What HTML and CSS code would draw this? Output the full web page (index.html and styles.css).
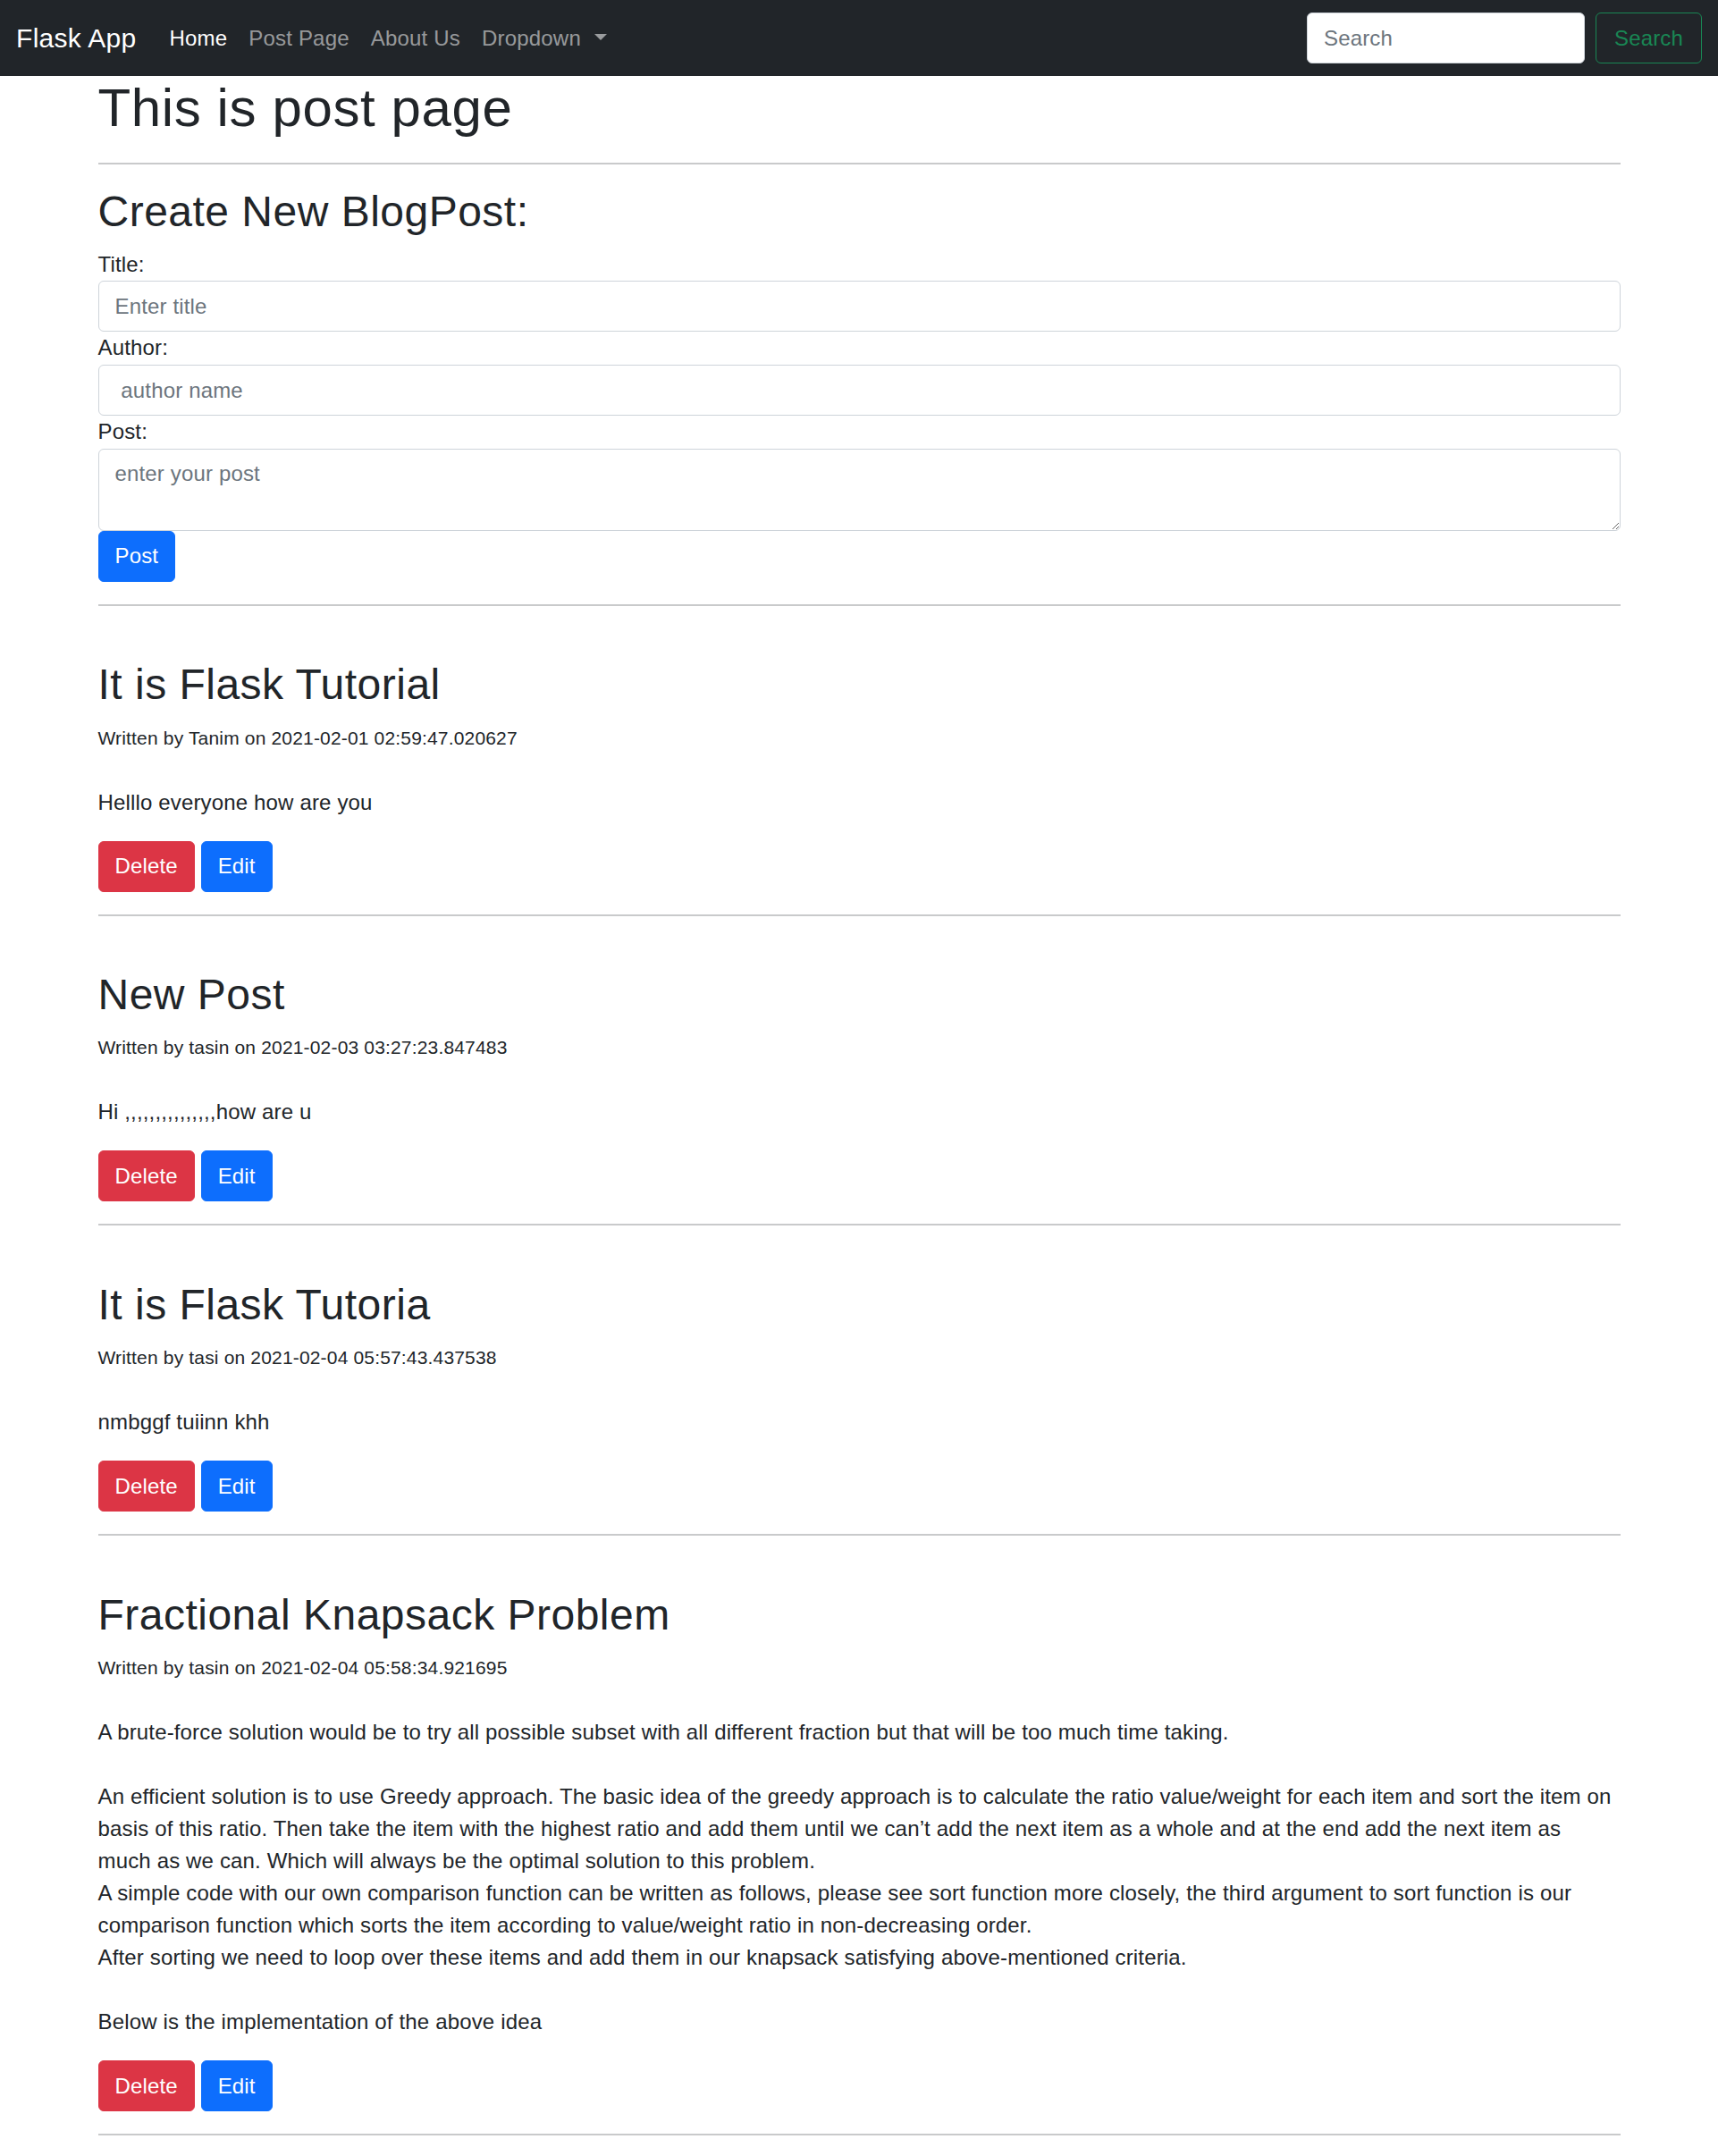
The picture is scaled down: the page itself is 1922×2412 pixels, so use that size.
FILE: index.html
```html
<!DOCTYPE html>
<html lang="en">
<head>
<meta charset="utf-8">
<title>Flask App - Posts</title>
<link rel="stylesheet" href="styles.css">
</head>
<body>
<nav class="navbar">
  <a class="brand" href="#">Flask App</a>
  <ul class="nav-links">
    <li><a class="nav-link active" href="#">Home</a></li>
    <li><a class="nav-link" href="#">Post Page</a></li>
    <li><a class="nav-link" href="#">About Us</a></li>
    <li><a class="nav-link dropdown-toggle" href="#">Dropdown</a></li>
  </ul>
  <form class="search-form">
    <input class="search-input" type="search" placeholder="Search">
    <button class="btn btn-outline-success" type="button">Search</button>
  </form>
</nav>

<main class="container">
  <h1 class="page-title">This is post page</h1>
  <hr class="rule">
  <h2 class="section-title">Create New BlogPost:</h2>
  <form class="post-form">
    <label class="field-label" for="title">Title:</label>
    <input class="form-control" id="title" type="text" placeholder="Enter title">
    <label class="field-label" for="author">Author:</label>
    <input class="form-control" id="author" type="text" placeholder=" author name">
    <label class="field-label" for="post">Post:</label>
    <textarea class="form-control form-textarea" id="post" placeholder="enter your post"></textarea>
    <button class="btn btn-primary" type="button">Post</button>
  </form>
  <hr class="rule">

  <article class="post">
    <h2 class="post-title">It is Flask Tutorial</h2>
    <div class="post-meta"><small>Written by Tanim on 2021-02-01 02:59:47.020627</small></div>
    <p class="post-body">Helllo everyone how are you</p>
    <div class="post-actions"><a class="btn btn-danger" href="#">Delete</a> <a class="btn btn-primary" href="#">Edit</a></div>
  </article>
  <hr class="rule">

  <article class="post">
    <h2 class="post-title">New Post</h2>
    <div class="post-meta"><small>Written by tasin on 2021-02-03 03:27:23.847483</small></div>
    <p class="post-body">Hi ,,,,,,,,,,,,,,,how are u</p>
    <div class="post-actions"><a class="btn btn-danger" href="#">Delete</a> <a class="btn btn-primary" href="#">Edit</a></div>
  </article>
  <hr class="rule">

  <article class="post">
    <h2 class="post-title">It is Flask Tutoria</h2>
    <div class="post-meta"><small>Written by tasi on 2021-02-04 05:57:43.437538</small></div>
    <p class="post-body">nmbggf tuiinn khh</p>
    <div class="post-actions"><a class="btn btn-danger" href="#">Delete</a> <a class="btn btn-primary" href="#">Edit</a></div>
  </article>
  <hr class="rule">

  <article class="post">
    <h2 class="post-title">Fractional Knapsack Problem</h2>
    <div class="post-meta"><small>Written by tasin on 2021-02-04 05:58:34.921695</small></div>
    <p class="post-body">A brute-force solution would be to try all possible subset with all different fraction but that will be too much time taking.<br><br>An efficient solution is to use Greedy approach. The basic idea of the greedy approach is to calculate the ratio value/weight for each item and sort the item on basis of this ratio. Then take the item with the highest ratio and add them until we can’t add the next item as a whole and at the end add the next item as<br>much as we can. Which will always be the optimal solution to this problem.<br>A simple code with our own comparison function can be written as follows, please see sort function more closely, the third argument to sort function is our comparison function which sorts the item according to value/weight ratio in non-decreasing order.<br>After sorting we need to loop over these items and add them in our knapsack satisfying above-mentioned criteria.<br><br>Below is the implementation of the above idea</p>
    <div class="post-actions"><a class="btn btn-danger" href="#">Delete</a> <a class="btn btn-primary" href="#">Edit</a></div>
  </article>
  <hr class="rule rule-last">
</main>
</body>
</html>
```

FILE: styles.css
```css
html, body {
  margin: 0;
  padding: 0;
}

body {
  font-family: "Liberation Sans", Arial, Helvetica, sans-serif;
  font-size: 24px;
  line-height: 36px;
  letter-spacing: 0.0065em;
  color: #212529;
  background: #fff;
}

/* ---------- navbar ---------- */
.navbar {
  display: flex;
  align-items: center;
  height: 85px;
  padding: 0 18px;
  background: #212529;
  box-sizing: border-box;
}

.brand {
  font-size: 30px;
  line-height: 45px;
  letter-spacing: 0.01em;
  color: #fff;
  text-decoration: none;
  margin-right: 25px;
}

.nav-links {
  display: flex;
  list-style: none;
  margin: 0;
  padding: 0;
}

.nav-link {
  display: block;
  padding: 12px;
  letter-spacing: 0.008em;
  color: rgba(255, 255, 255, 0.55);
  text-decoration: none;
}

.nav-link.active {
  color: #fff;
}

.dropdown-toggle::after {
  content: "";
  display: inline-block;
  margin-left: 15px;
  vertical-align: 6px;
  border-top: 7px solid;
  border-right: 7px solid transparent;
  border-left: 7px solid transparent;
  border-bottom: 0;
}

.search-form {
  display: flex;
  margin: 0 0 0 auto;
}

.search-input {
  width: 311px;
  height: 57px;
  box-sizing: border-box;
  margin-right: 12px;
  padding: 9.5px 18px;
  font: inherit;
  letter-spacing: inherit;
  color: #212529;
  background: #fff;
  border: 1px solid #ced4da;
  border-radius: 6px;
  outline: none;
}

.search-input::placeholder {
  color: #6c757d;
}

/* ---------- buttons ---------- */
.btn {
  display: inline-block;
  box-sizing: border-box;
  padding: 9.5px 18px;
  font: inherit;
  line-height: 36px;
  letter-spacing: inherit;
  color: #fff;
  text-decoration: none;
  border: 1px solid transparent;
  border-radius: 6px;
  vertical-align: middle;
  cursor: pointer;
}

.btn-primary {
  background: #0d6efd;
  border-color: #0d6efd;
}

.btn-danger {
  background: #dc3545;
  border-color: #dc3545;
}

.btn-outline-success {
  padding: 9.5px 20px;
  color: #198754;
  background: transparent;
  border-color: #198754;
}

/* ---------- page ---------- */
.container {
  width: 1703px;
  margin: 0 auto;
}

.page-title {
  margin: 0;
  font-size: 60px;
  line-height: 72px;
  font-weight: 400;
  letter-spacing: 0.0102em;
}

.rule {
  height: 0;
  margin: 25px 0 24px;
  border: 0;
  border-top: 2px solid #c9cacb;
}

.rule-last {
  margin-bottom: 20px;
}

.section-title,
.post-title {
  margin: 0 0 12px;
  font-size: 48px;
  line-height: 57.6px;
  font-weight: 400;
  letter-spacing: 0.0102em;
}

.field-label {
  display: block;
  line-height: 36.7px;
}

.form-control {
  display: block;
  width: 100%;
  height: 57px;
  box-sizing: border-box;
  padding: 9.5px 18px;
  font: inherit;
  line-height: 36px;
  letter-spacing: inherit;
  color: #212529;
  background: #fff;
  border: 1px solid #ced4da;
  border-radius: 6px;
  outline: none;
}

.form-control::placeholder {
  color: #6c757d;
}

.form-textarea {
  height: 92px;
  resize: vertical;
}

.post {
  padding-top: 35.3px;
}

.post-meta small {
  font-size: 21px;
  letter-spacing: 0.008em;
}

.post-body {
  margin: 36px 0 25px;
}
```
